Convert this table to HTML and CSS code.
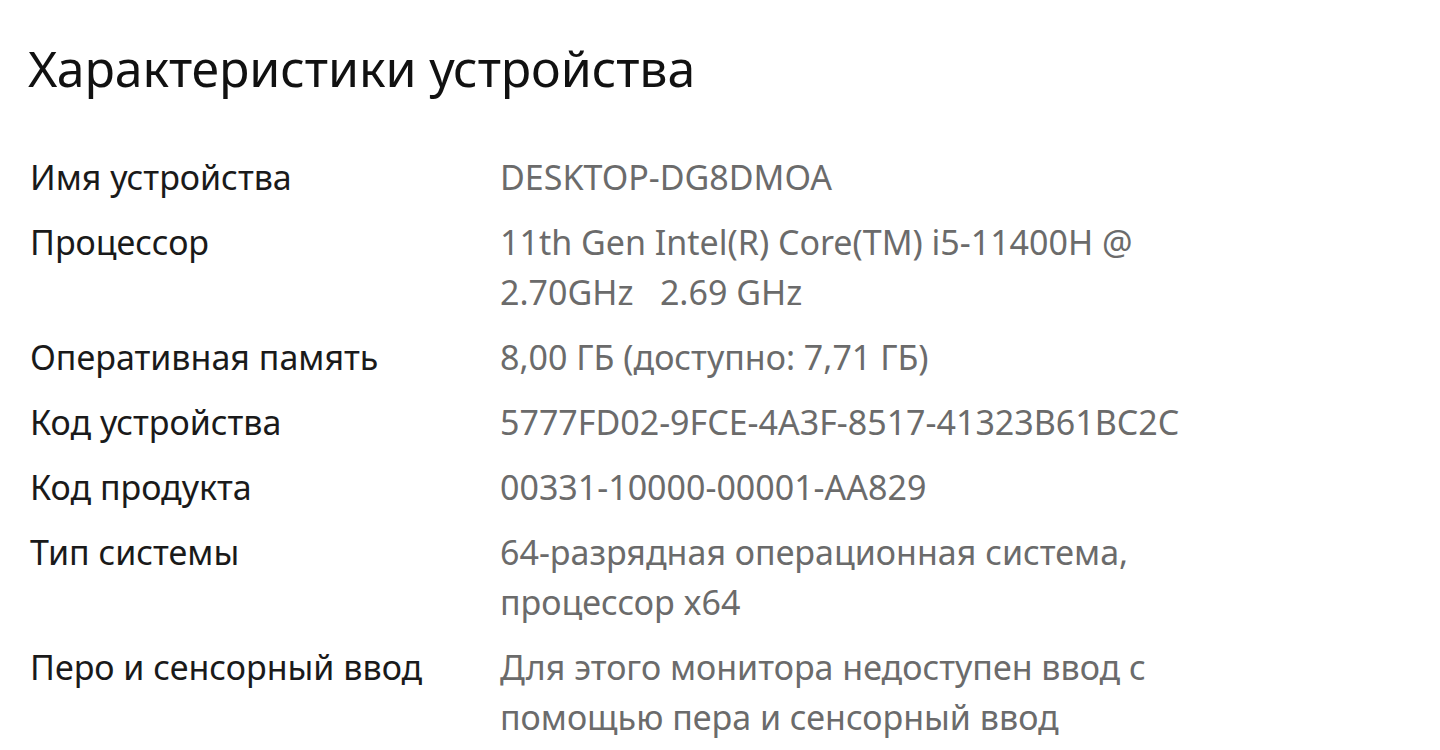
FILE: index.html
```html
<!DOCTYPE html>
<html lang="ru">
<head>
<meta charset="utf-8">
<link rel="stylesheet" href="styles.css">
</head>
<body>
<main class="page">
  <h1 class="title">Характеристики устройства</h1>
  <dl class="specs">
    <dt class="label">Имя устройства</dt>
    <dd class="value">DESKTOP-DG8DMOA</dd>
    <dt class="label">Процессор</dt>
    <dd class="value">11th Gen Intel(R) Core(TM) i5-11400H @<br>2.70GHz&nbsp;&nbsp;&nbsp;2.69 GHz</dd>
    <dt class="label">Оперативная память</dt>
    <dd class="value">8,00 ГБ (доступно: 7,71 ГБ)</dd>
    <dt class="label">Код устройства</dt>
    <dd class="value">5777FD02-9FCE-4A3F-8517-41323B61BC2C</dd>
    <dt class="label">Код продукта</dt>
    <dd class="value">00331-10000-00001-AA829</dd>
    <dt class="label">Тип системы</dt>
    <dd class="value">64-разрядная операционная система,<br>процессор x64</dd>
    <dt class="label">Перо и сенсорный ввод</dt>
    <dd class="value">Для этого монитора недоступен ввод с<br>помощью пера и сенсорный ввод</dd>
  </dl>
</main>
</body>
</html>
```

FILE: styles.css
```css
html, body {
  margin: 0;
  padding: 0;
  background: #ffffff;
}
body {
  font-family: "Noto Sans", "Open Sans", sans-serif;
  color: #111111;
}
.page {
  padding: 33px 0 0 28px;
}
.title {
  margin: 0;
  font-size: 50px;
  font-weight: 400;
  line-height: 70px;
  color: #111111;
  letter-spacing: -0.1px;
}
.specs {
  margin: 49px 0 0 2px;
  display: grid;
  grid-template-columns: 470px auto;
  row-gap: 15px;
  font-size: 34px;
  line-height: 50px;
}
.label {
  margin: 0;
  color: #1a1a1a;
  white-space: nowrap;
}
.value {
  margin: 0;
  color: #6b6b6b;
  white-space: nowrap;
}
```
